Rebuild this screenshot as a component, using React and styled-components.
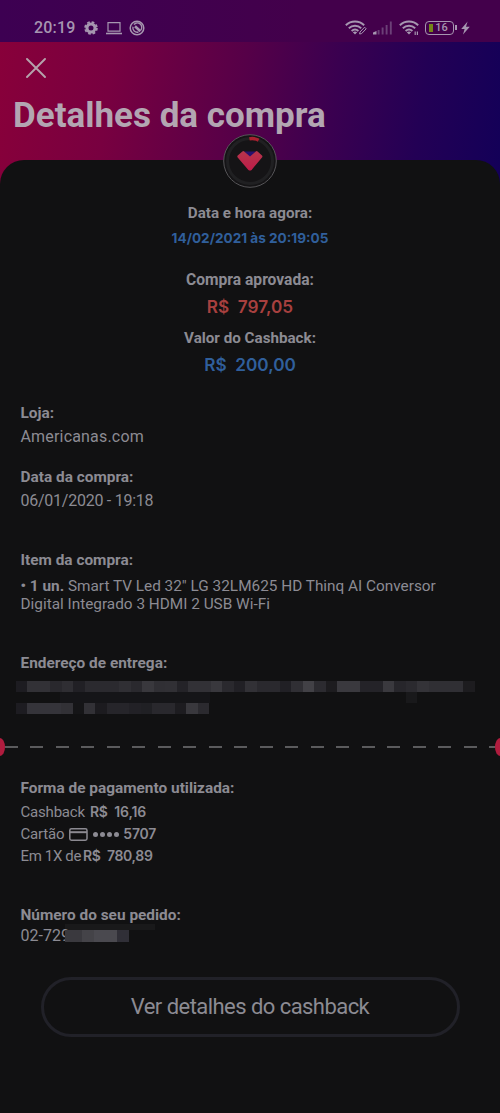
import styled, { createGlobalStyle } from 'styled-components'

const App = () => {
    return (
        <Screen>
            <GlobalStyle />
            <StatusBar />
            <Header>
                <CloseButton aria-label='Fechar'>
                    <svg width='20' height='20' viewBox='0 0 20 20' fill='none'>
                        <path
                            d='M1 1 19 19M19 1 1 19'
                            stroke='#b5a3ac'
                            strokeWidth='1.9'
                            strokeLinecap='round'
                        />
                    </svg>
                </CloseButton>
                <Title>Detalhes da compra</Title>
            </Header>
            <Sheet>
                <Badge>
                    <BadgeLogo />
                </Badge>
                <Summary>
                    <Label $size='15.2px'>Data e hora agora:</Label>
                    <Now>14/02/2021 às 20:19:05</Now>
                    <Label $size='15.6px'>Compra aprovada:</Label>
                    <Amount $color='#a8403f'>R$&nbsp; 797,05</Amount>
                    <Label $size='15.2px'>Valor do Cashback:</Label>
                    <Amount $color='#305f9b' $size='17.2px'>
                        R$&nbsp; 200,00
                    </Amount>
                </Summary>
                <Section $height='64px'>
                    <Label>Loja:</Label>
                    <Value $spacing='0.18px'>Americanas.com</Value>
                </Section>
                <Section $height='83px'>
                    <Label>Data da compra:</Label>
                    <Value $spacing='-0.25px'>06/01/2020 - 19:18</Value>
                </Section>
                <Section $height='103px'>
                    <Label>Item da compra:</Label>
                    <Item>
                        <b>• 1 un.</b> Smart TV Led 32&quot; LG 32LM625 HD Thinq AI Conversor
                        <br />
                        Digital Integrado 3 HDMI 2 USB Wi-Fi
                    </Item>
                </Section>
                <Section $height='84px'>
                    <Label>Endereço de entrega:</Label>
                    <Address />
                </Section>
                <Divider>
                    <Notch />
                    <Dashes />
                    <Notch $right />
                </Divider>
                <Section $height='127px'>
                    <Label>Forma de pagamento utilizada:</Label>
                    <Payment>
                        <span>Cashback</span>
                        <b>R$&nbsp; 16,16</b>
                    </Payment>
                    <Payment>
                        <span>Cartão</span>
                        <CardIcon />
                        <Dots>
                            <i />
                            <i />
                            <i />
                            <i />
                        </Dots>
                        <b>5707</b>
                    </Payment>
                    <Payment $gap='2px' $spacing='-0.35px'>
                        <span>Em 1X de</span>
                        <b>R$&nbsp; 780,89</b>
                    </Payment>
                </Section>
                <Section $height='72px'>
                    <Label>Número do seu pedido:</Label>
                    <Order>
                        <span>02-729</span>
                        <OrderMask />
                    </Order>
                </Section>
                <Button>Ver detalhes do cashback</Button>
            </Sheet>
        </Screen>
    )
}

const StatusBar = () => (
    <Bar>
        <Clock>20:19</Clock>
        <svg width='14' height='14' viewBox='0 0 14 14'>
            <circle cx='7' cy='7' r='4' fill='none' stroke='#a696b0' strokeWidth='3' />
            <circle
                cx='7'
                cy='7'
                r='5.9'
                fill='none'
                stroke='#a696b0'
                strokeWidth='1.8'
                strokeDasharray='2.7 1.93'
            />
        </svg>
        <Laptop width='16' height='14' viewBox='0 0 16 14' fill='none' stroke='#a696b0'>
            <path d='M2 1.6h12v8.6H2z' strokeWidth='1.2' />
            <path d='M0 12.5h16' strokeWidth='1.6' />
        </Laptop>
        <svg width='16' height='16' viewBox='0 0 16 16' fill='none' stroke='#a696b0'>
            <circle cx='8' cy='8' r='6.8' strokeWidth='1.5' />
            <path d='M5 4.6A4.3 4.3 0 0 1 11.8 10M4 6.8A4.3 4.3 0 0 0 9.4 12' strokeWidth='1.4' />
            <path d='m6 6.2 5.4 5' strokeWidth='2.6' />
        </svg>
        <Spacer />
        <Wifi variant='edit' />
        <Signal width='20' height='14' viewBox='0 0 20 14'>
            <path d='M0 13.5v-2L3.5 10v3.5z' fill='#a696b0' />
            <path
                d='M5.6 13.5V9M9.6 13.5V6.5M13.6 13.5V4M17.8 13.5V.5'
                stroke='#6c4078'
                strokeWidth='1.9'
            />
        </Signal>
        <Wifi />
        <Battery>
            <Charge />
            16
        </Battery>
        <svg width='9' height='14' viewBox='0 0 9 14'>
            <path d='M6.6.6.2 7.9h3.4L2 13.4 8.8 5.8H5z' fill='#a696b0' />
        </svg>
    </Bar>
)

const Wifi = ({ variant }) => (
    <WifiIcon width='22' height='16' viewBox='0 0 22 16' fill='none' stroke='#a696b0'>
        <path
            d='M.8 5.2C6 .2 14 .2 19.2 5.2M3.8 8.2c3.6-3.3 8.8-3.3 12.4 0M6.6 11c2-1.8 4.8-1.8 6.8 0'
            strokeWidth='1.9'
        />
        <path d='M7.8 12.2 10 14.6l2.2-2.4q-2.2-1.6-4.4 0z' fill='#a696b0' stroke='none' />
        {variant === 'edit' ? (
            <path d='m14.6 14 .4-2 4.6-4.8 1.6 1.6-4.6 4.8z' fill='#43004d' strokeWidth='1' />
        ) : (
            <path d='M16.2 11.6v3.4M18.4 11.6v3.4' strokeWidth='1.2' />
        )}
    </WifiIcon>
)

const BadgeLogo = () => (
    <svg width='54' height='54' viewBox='0 0 54 54'>
        <defs>
            <linearGradient id='heart' x1='0' y1='0' x2='0' y2='1'>
                <stop offset='0' stopColor='#b5354c' />
                <stop offset='1' stopColor='#bd1c48' />
            </linearGradient>
        </defs>
        <circle cx='27' cy='27' r='26.3' fill='#151416' stroke='#565558' strokeWidth='1' />
        <circle cx='27' cy='27' r='22.5' fill='none' stroke='#202022' strokeWidth='3' />
        <path d='M26.4 4.8q5-1 9.2 1.4' fill='none' stroke='#a9202f' strokeWidth='3.4' />
        <path d='m21 17.6 6 6 6-6z' fill='#26106d' />
        <path
            d='M19.4 17.5q.9-.8 1.8 0l5.8 5 5.8-5q.9-.8 1.8 0l4.4 4.1q.9.9 0 1.8L28.6 35.9q-1.6 1.3-3.2 0L14.7 23.4q-.8-.9 0-1.8z'
            fill='url(#heart)'
        />
    </svg>
)

const CardIcon = () => (
    <CardSvg width='19' height='13' viewBox='0 0 19 13' fill='none' stroke='#8c8a91'>
        <rect x='.8' y='.8' width='17.2' height='11.4' rx='1.6' strokeWidth='1.5' />
        <path d='M1 4.2h17' strokeWidth='2' />
    </CardSvg>
)

// shades of the blurred blocks, left to right
const line1 = [
    '#1d1c21', '#323136', '#323136', '#29282d', '#2f2e33', '#212025', '#2b2a2f', '#2b2a2f', '#2b2a2f',
    '#302f34', '#2a292e', '#39383d', '#302f34', '#313035', '#242328', '#323136', '#323136', '#39383d',
    '#2a292e', '#212025', '#323136', '#2a292e', '#2a292e', '#212025', '#302f34', '#424146', '#2c2b30',
    '#1d1c1f', '#3a393e', '#3a393e', '#242328', '#242328', '#3a393e', '#27262b', '#2b2a2f', '#343338',
    '#302f34', '#302f34', '#302f34', '#1d1c1f',
]
const line2 = [
    '#1d1c21', '#35343a', '#35343a', '#35343a', '#323136', '#151517', '#323136', '#1c1b1f', '#26252a',
    '#26252a', '#222126', '#202024', '#29282d', '#29282d', '#1d1c20', '#39383d', '#2b2a2f',
]

const Address = () => (
    <Mask>
        <MaskRow>
            {line1.map((shade, i) => (
                <Block key={i} $shade={shade} />
            ))}
        </MaskRow>
        <MaskShadow>
            <Faint $width='150px' />
            <Faint $width='11px' $strong />
        </MaskShadow>
        <MaskRow>
            {line2.map((shade, i) => (
                <Block key={i} $shade={shade} $narrow />
            ))}
        </MaskRow>
    </Mask>
)

const GlobalStyle = createGlobalStyle`
    * {
        box-sizing: border-box;
    }
    body {
        margin: 0;
        background: #111112;
        font-family: Roboto, 'Liberation Sans', sans-serif;
        color: #8c8b93;
    }
`
const Screen = styled.main`
    display: flex;
    flex-direction: column;
    width: 500px;
    height: 1113px;
    overflow: hidden;
    background: linear-gradient(97deg, #88003a 0%, #780040 22%, #560048 48%, #3a0050 66%, #230055 83%, #130058 100%) 0
        42px / 100% 142px no-repeat;
`
const Bar = styled.header`
    display: flex;
    align-items: center;
    height: 42px;
    padding: 13px 30px 0 34px;
    background: linear-gradient(90deg, #3d0052, #43004b 60%, #43004b);
    color: #a696b0;
`
const Clock = styled.span`
    width: 50px;
    font-size: 16px;
    font-weight: 500;
    letter-spacing: 0.2px;
`
const Laptop = styled.svg`
    margin: 0 7px 0 8px;
`
const Spacer = styled.div`
    flex: 1;
`
const WifiIcon = styled.svg`
    flex: none;
`
const Signal = styled.svg`
    margin: 0 6px 0 6px;
`
const Battery = styled.div`
    position: relative;
    display: flex;
    align-items: center;
    justify-content: center;
    width: 29px;
    height: 14px;
    margin: 0 7px 0 4px;
    border: 1.5px solid #a696b0;
    border-radius: 4px;
    font-size: 11px;
    font-weight: 500;
    &::after {
        content: '';
        position: absolute;
        right: -4px;
        top: 3px;
        width: 2px;
        height: 5px;
        background: #a696b0;
    }
`
const Charge = styled.i`
    width: 4px;
    height: 8px;
    margin: 0 2px 0 -2px;
    background: #758519;
`
const Header = styled.div`
    height: 118px;
    padding: 16px 13px 0;
`
const CloseButton = styled.button`
    display: block;
    width: 20px;
    height: 20px;
    margin-left: 13px;
    padding: 0;
    border: 0;
    background: none;
`
const Title = styled.h1`
    margin: 18px 0 0;
    color: #b3a6b2;
    font-size: 35px;
    line-height: 40px;
    font-weight: 700;
    white-space: nowrap;
`
const Sheet = styled.section`
    position: relative;
    flex: 1;
    border-radius: 24px 24px 0 0;
    background: #111112;
`
const Badge = styled.div`
    position: absolute;
    left: 223px;
    top: -26px;
    width: 54px;
    height: 54px;
`
const Label = styled.h2`
    margin: 0;
    font-size: ${(props) => props.$size || '15.4px'};
    line-height: 20px;
    font-weight: 700;
`
const Summary = styled.div`
    height: 243px;
    padding-top: 43px;
    text-align: center;
`
const Now = styled.p`
    margin: 5px 0 22px;
    color: #305f9b;
    font-family: Inter, sans-serif;
    font-size: 13.6px;
    line-height: 20px;
    font-weight: 700;
`
const Amount = styled.p`
    margin: 3px 0 7px;
    color: ${(props) => props.$color};
    font-family: Inter, sans-serif;
    font-size: ${(props) => props.$size || '17.2px'};
    line-height: 28px;
    font-weight: 600;
`
const Section = styled.div`
    height: ${(props) => props.$height};
    padding-left: 20.5px;
`
const Value = styled.p`
    margin: 3px 0 0;
    font-size: 16px;
    line-height: 22px;
    letter-spacing: ${(props) => props.$spacing};
`
const Item = styled.p`
    margin: 7px 0 0;
    font-size: 15.35px;
    line-height: 18px;
    white-space: nowrap;
`
const Mask = styled.div`
    margin: 8px 0 0 -4.5px;
`
const MaskRow = styled.div`
    display: flex;
    height: 11px;
`
const Block = styled.i`
    width: ${(props) => (props.$narrow ? '11.35px' : '11.47px')};
    background: ${(props) => props.$shade};
`
const MaskShadow = styled.div`
    display: flex;
    justify-content: space-between;
    width: 357px;
    height: 11px;
    margin-left: 44px;
`
const Faint = styled.i`
    width: ${(props) => props.$width};
    background: ${(props) => (props.$strong ? '#19191b' : '#151518')};
`
const Divider = styled.div`
    display: flex;
    align-items: center;
    height: 20px;
    margin-bottom: 21px;
`
const Notch = styled.i`
    width: 5px;
    height: 18px;
    border-radius: ${(props) => (props.$right ? '5px 0 0 5px / 9px 0 0 9px' : '0 5px 5px 0 / 0 9px 9px 0')};
    background: #b01c3e;
`
const Dashes = styled.div`
    flex: 1;
    height: 2px;
    background: repeating-linear-gradient(90deg, #5b5b5d 0 13px, transparent 13px 25.5px);
`
const Payment = styled.div`
    display: flex;
    align-items: center;
    gap: ${(props) => props.$gap || '5px'};
    height: 22px;
    font-size: 15px;
    letter-spacing: ${(props) => props.$spacing || '-0.2px'};
    &:nth-of-type(1) {
        margin-top: 3px;
    }
    b {
        margin-bottom: 1px;
        font-family: Inter, sans-serif;
        font-size: 14px;
        font-weight: 600;
    }
`
const CardSvg = styled.svg`
    flex: none;
`
const Dots = styled.span`
    display: flex;
    gap: 2px;
    margin-right: -1px;
    i {
        width: 5px;
        height: 5px;
        border-radius: 50%;
        background: #8c8b93;
    }
`
const Order = styled.div`
    display: flex;
    align-items: center;
    height: 21px;
    font-size: 16px;
`
// sits over the tail of the order number
const OrderMask = styled.i`
    position: relative;
    width: 64px;
    height: 12px;
    margin-left: -5px;
    background: linear-gradient(90deg, #3a393e 0 17px, #444348 17px 29px, #4a494f 29px 52px, #302f37 52px);
    &::before {
        content: '';
        position: absolute;
        left: 0;
        bottom: 100%;
        width: 90px;
        height: 6px;
        background: rgba(140, 139, 147, 0.07);
    }
`
const Button = styled.button`
    display: block;
    width: 419px;
    height: 60px;
    margin: 0 0 0 40.5px;
    padding: 0 0 1px;
    border: 3px solid #212128;
    border-radius: 30px;
    background: none;
    color: #8c8b93;
    font-family: Roboto, sans-serif;
    font-size: 22px;
    letter-spacing: -0.55px;
`

export default App
